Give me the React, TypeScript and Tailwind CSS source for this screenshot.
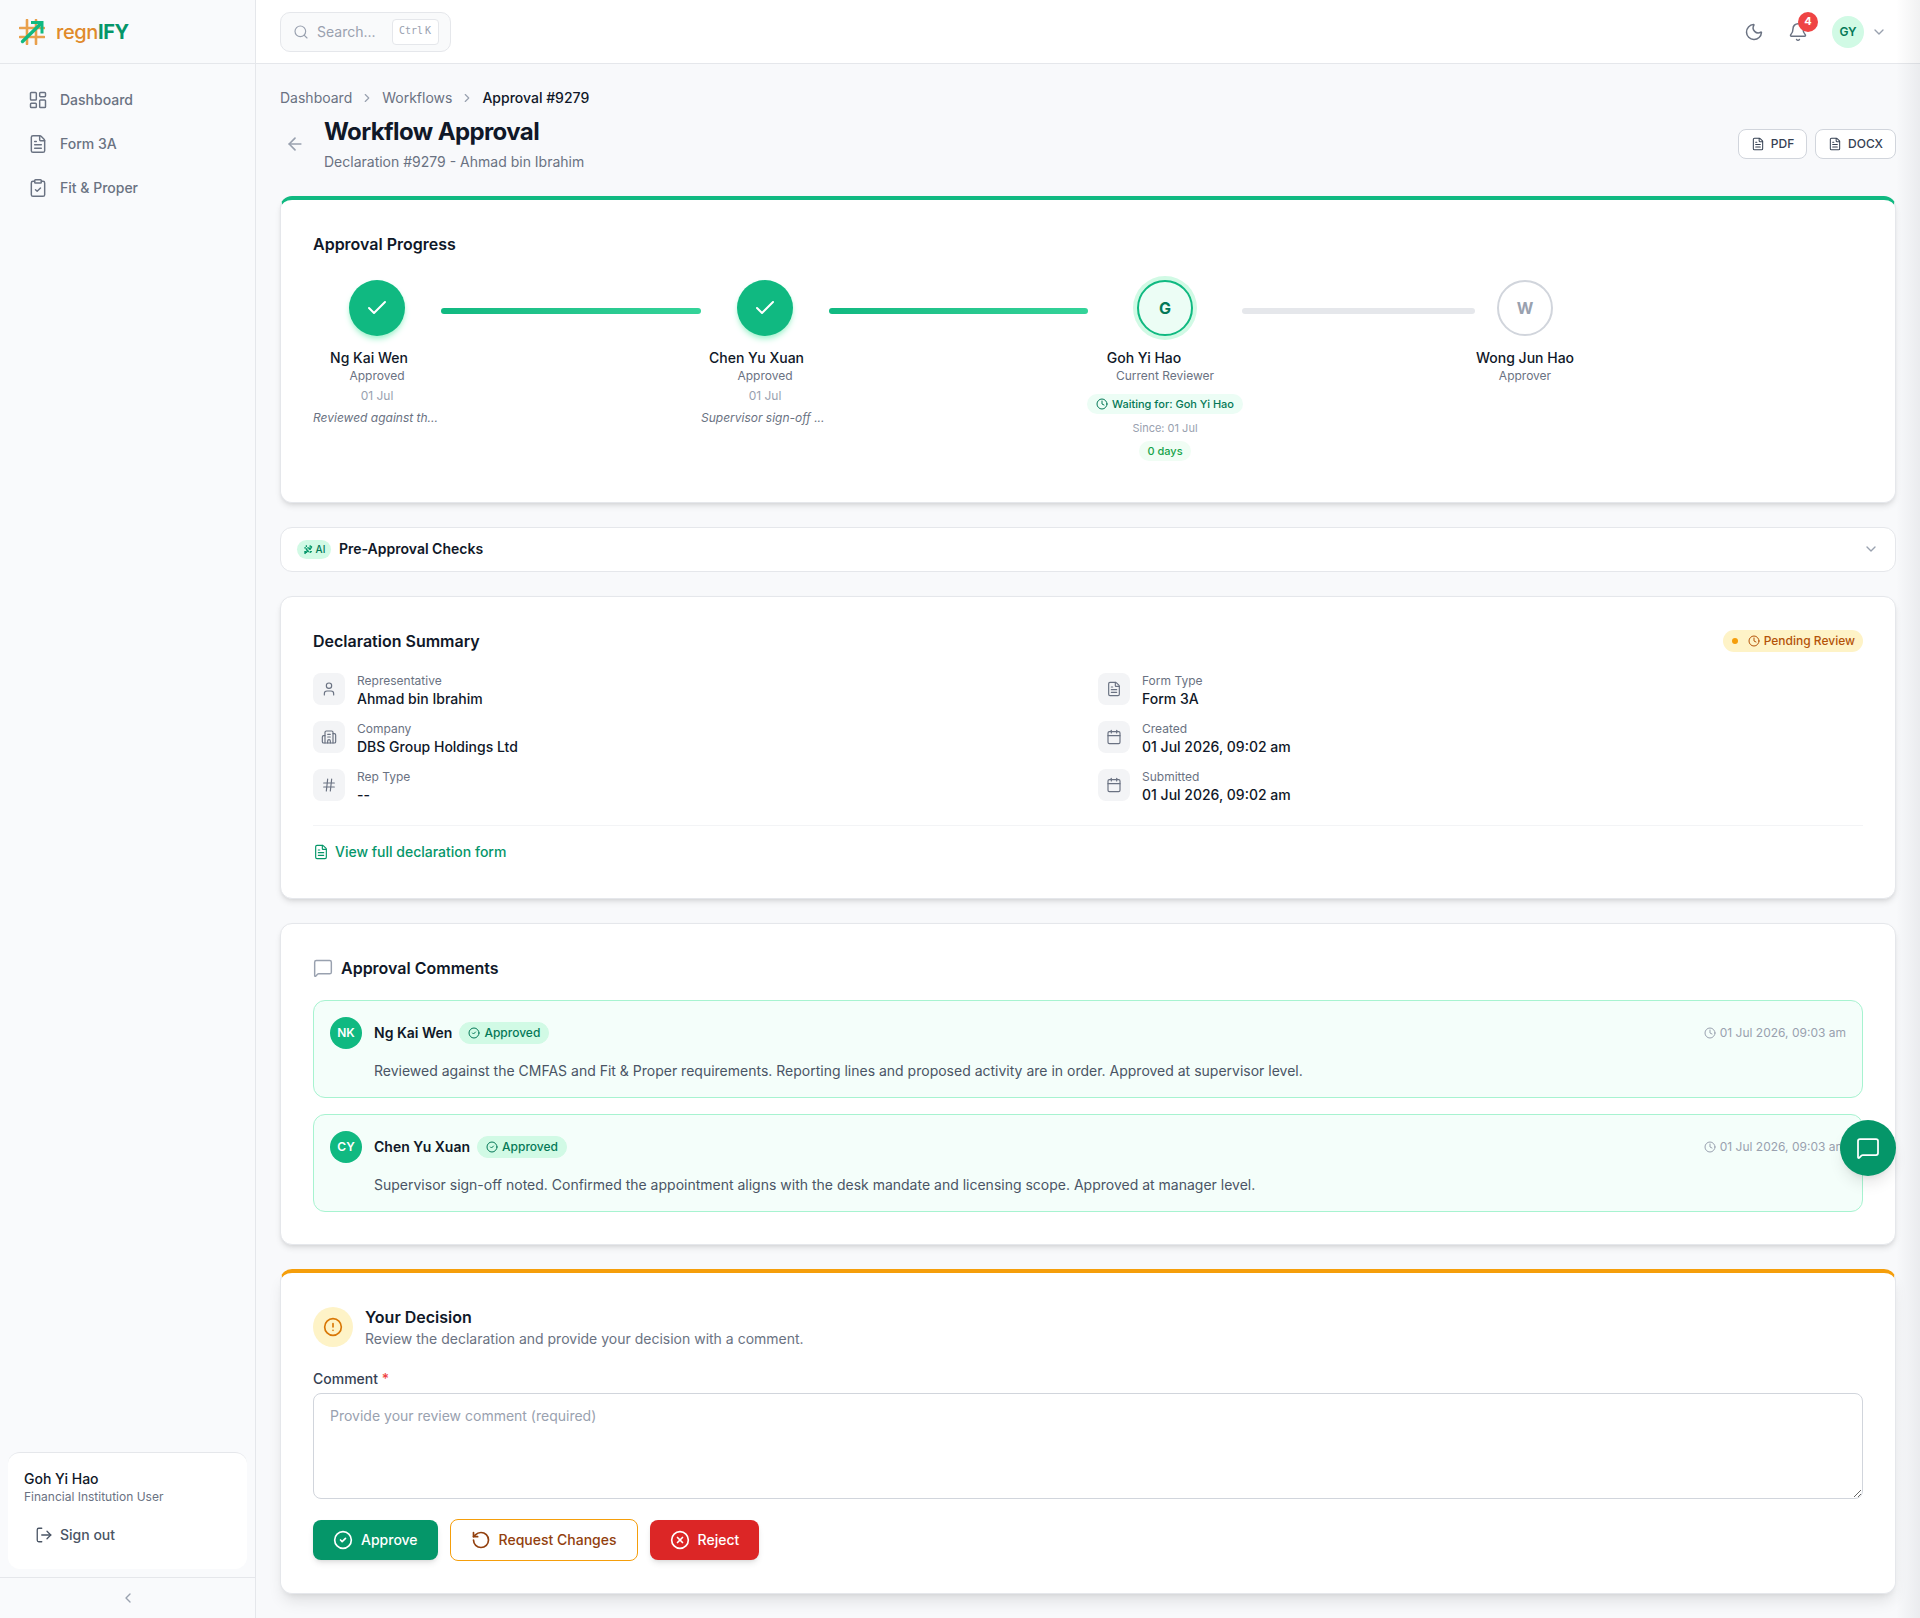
import React from 'react';
import {
  ArrowLeft,
  Bell,
  Building2,
  Calendar,
  Check,
  ChevronDown,
  ChevronLeft,
  ChevronRight,
  CircleAlert,
  CircleCheck,
  CircleX,
  ClipboardCheck,
  Clock,
  FileText,
  Hash,
  LayoutDashboard,
  LogOut,
  MessageSquare,
  Moon,
  RotateCcw,
  Search,
  User,
} from 'lucide-react';

const Logo = () => (
  <svg width="26" height="26" viewBox="0 0 26 26" fill="none">
    <path d="M8 1v24M17 1v24M1 9h24M1 18h24" stroke="#e9a04c" strokeWidth="2.6" strokeLinecap="round" />
    <path d="M3.5 22.5 21 5.5" stroke="#10b981" strokeWidth="3.4" strokeLinecap="round" />
    <path d="M13.5 3.5H23v9.5" stroke="#10b981" strokeWidth="3" strokeLinecap="square" />
  </svg>
);

const MiniLogo = () => (
  <svg width="11" height="11" viewBox="0 0 26 26" fill="none">
    <path d="M8 3v20M17 3v20M3 9h20M3 18h20" stroke="#059669" strokeWidth="3" strokeDasharray="4 3" />
    <path d="M3.5 22.5 21 5.5" stroke="#059669" strokeWidth="4" strokeDasharray="5 2" />
  </svg>
);

const NavItem = ({ icon: Icon, label }: { icon: React.ElementType; label: string }) => (
  <div className="flex items-center gap-3 px-3 py-3 text-sm font-medium text-gray-500">
    <Icon className="w-5 h-5 shrink-0" strokeWidth={1.75} />
    <span>{label}</span>
  </div>
);

const Sidebar = () => (
  <aside className="w-[256px] shrink-0 flex flex-col bg-[#f9fafc] border-r border-gray-200">
    <div className="h-[64px] shrink-0 flex items-center pl-[19px] border-b border-gray-200">
      <Logo />
      <span className="ml-[11px] text-xl tracking-[-0.4px] font-medium text-[#e08a2b]">
        regn<span className="font-bold text-[#059669]">IFY</span>
      </span>
    </div>
    <nav className="px-4 pt-[14px]">
      <NavItem icon={LayoutDashboard} label="Dashboard" />
      <NavItem icon={FileText} label="Form 3A" />
      <NavItem icon={ClipboardCheck} label="Fit & Proper" />
    </nav>
    <div className="mt-auto px-2 pb-2">
      <div className="bg-white border-t border-gray-200 rounded-xl px-4 pt-4 h-[117px]">
        <p className="text-sm font-medium leading-5 text-gray-900">Goh Yi Hao</p>
        <p className="text-xs leading-4 text-gray-500">Financial Institution User</p>
        <div className="flex items-center gap-[7px] pl-[11px] mt-5 text-sm font-medium text-gray-600">
          <LogOut className="w-[18px] h-[18px]" strokeWidth={1.75} />
          <span>Sign out</span>
        </div>
      </div>
    </div>
    <div className="h-[41px] shrink-0 flex items-center justify-center border-t border-gray-200 text-gray-400">
      <ChevronLeft className="w-4 h-4" />
    </div>
  </aside>
);

const TopBar = () => (
  <header className="h-[64px] shrink-0 flex items-center justify-between pl-6 pr-[33px] bg-white border-b border-gray-200">
    <div className="w-[171px] h-10 flex items-center gap-2 pl-3 bg-gray-50 border border-gray-200 rounded-[10px] text-sm text-gray-400">
      <Search className="w-4 h-4 shrink-0" strokeWidth={1.75} />
      <span>Search...</span>
      <kbd className="ml-[8px] w-[47px] h-[26px] flex items-center justify-center gap-[2px] bg-white border border-gray-200 rounded text-[10px] font-[400] [font-family:'DejaVu_Sans_Mono',monospace]">
        <span>Ctrl</span>
        <span>K</span>
      </kbd>
    </div>
    <div className="flex items-center">
      <Moon className="w-5 h-5 text-gray-500" strokeWidth={1.75} />
      <div className="relative ml-[24px] mr-[24px]">
        <Bell className="w-5 h-5 text-gray-500" strokeWidth={1.75} />
        <span className="absolute -top-[10px] left-[10px] w-5 h-5 flex items-center justify-center rounded-full bg-[#ef4444] text-white text-[11px] font-bold">
          4
        </span>
      </div>
      <div className="w-8 h-8 flex items-center justify-center rounded-full bg-[#d1fae5] text-[#047857] text-xs font-semibold">
        GY
      </div>
      <ChevronDown className="ml-[7px] w-4 h-4 text-gray-400" />
    </div>
  </header>
);

type Step = {
  width: string;
  namePad: string;
  name: string;
  role: string;
  state: 'done' | 'current' | 'pending';
  letter?: string;
  date?: string;
  note?: string;
};

const StepCircle = ({ step }: { step: Step }) => {
  if (step.state === 'done') {
    return (
      <div className="w-14 h-14 flex items-center justify-center rounded-full bg-[#10b981] text-white shadow-md shadow-[#a7f3d0]">
        <Check className="w-6 h-6" strokeWidth={2} />
      </div>
    );
  }
  if (step.state === 'current') {
    return (
      <div className="w-14 h-14 flex items-center justify-center rounded-full bg-[#ecfdf5] border-2 border-[#10b981] ring-4 ring-[#d1fae5] text-[#047857] text-base font-bold">
        {step.letter}
      </div>
    );
  }
  return (
    <div className="w-14 h-14 flex items-center justify-center rounded-full bg-white border-2 border-gray-300 text-gray-400 text-base font-bold">
      {step.letter}
    </div>
  );
};

const ProgressStep = ({ step, children }: { step: Step; children?: React.ReactNode }) => (
  <div className={`${step.width} shrink-0 flex flex-col items-center text-center`}>
    <StepCircle step={step} />
    <p className={`mt-3 ${step.namePad} text-sm leading-5 font-medium text-gray-900 whitespace-nowrap`}>{step.name}</p>
    <p className="text-xs leading-4 text-gray-500 whitespace-nowrap">{step.role}</p>
    {step.date && <p className="mt-[4px] text-xs leading-4 text-gray-400">{step.date}</p>}
    {step.note && <p className="mt-[6px] w-full text-xs leading-4 italic text-left text-gray-500 truncate">{step.note}</p>}
    {children}
  </div>
);

const steps: Step[] = [
  { width: 'w-[128px]', namePad: 'pr-[16px]', name: 'Ng Kai Wen', role: 'Approved', state: 'done', date: '01 Jul', note: 'Reviewed against th...' },
  { width: 'w-[128px]', namePad: 'pr-[17px]', name: 'Chen Yu Xuan', role: 'Approved', state: 'done', date: '01 Jul', note: 'Supervisor sign-off ...' },
  { width: 'w-[154px]', namePad: 'pr-[42px]', name: 'Goh Yi Hao', role: 'Current Reviewer', state: 'current', letter: 'G' },
  { width: 'w-[100px]', namePad: '', name: 'Wong Jun Hao', role: 'Approver', state: 'pending', letter: 'W' },
];

const ApprovalProgress = () => (
  <section className="bg-white rounded-xl border-x border-b border-gray-200 border-t-4 border-t-[#10b981] shadow-md px-8 pt-8 pb-[41px]">
    <h2 className="text-base leading-6 font-semibold text-gray-900">Approval Progress</h2>
    <div className="mt-6 flex items-start">
      <ProgressStep step={steps[0]} />
      <div className="w-[260px] h-[6px] mt-[28px] rounded-full bg-gradient-to-r from-[#10b981] to-[#34d399]" />
      <ProgressStep step={steps[1]} />
      <div className="w-[259px] h-[6px] mt-[28px] rounded-full bg-gradient-to-r from-[#10b981] to-[#34d399]" />
      <ProgressStep step={steps[2]}>
        <span className="mt-[10px] h-5 flex items-center gap-1 px-[9px] rounded-full bg-[#ecfdf5] text-[11px] font-medium text-[#047857] whitespace-nowrap">
          <Clock className="w-3 h-3" />
          Waiting for: Goh Yi Hao
        </span>
        <span className="mt-[6px] text-[11px] leading-4 text-gray-400">Since: 01 Jul</span>
        <span className="mt-[5px] h-5 flex items-center px-2 rounded-full bg-[#f0fdf4] text-[11px] font-medium text-[#16a34a]">
          0 days
        </span>
      </ProgressStep>
      <div className="w-[233px] h-[6px] mt-[28px] rounded-full bg-gray-200" />
      <ProgressStep step={steps[3]} />
    </div>
  </section>
);

const PreApproval = () => (
  <section className="h-[45px] flex items-center justify-between px-4 pb-px bg-white rounded-xl border border-gray-200">
    <div className="flex items-center gap-2">
      <span className="h-[19px] w-[34px] flex items-center justify-center gap-[2px] rounded-full bg-[#d1fae5] text-[10px] font-medium text-[#047857]">
        <MiniLogo />
        AI
      </span>
      <span className="text-sm font-semibold text-gray-900">Pre-Approval Checks</span>
    </div>
    <ChevronDown className="w-4 h-4 text-gray-400" />
  </section>
);

const Field = ({ icon: Icon, label, value }: { icon: React.ElementType; label: string; value: string }) => (
  <div className="h-8 flex items-start gap-3">
    <div className="w-8 h-8 shrink-0 flex items-center justify-center rounded-lg bg-gray-100 text-gray-500">
      <Icon className="w-4 h-4" strokeWidth={1.75} />
    </div>
    <div>
      <p className="text-xs leading-4 text-gray-500">{label}</p>
      <p className="text-sm leading-5 font-medium text-gray-900">{value}</p>
    </div>
  </div>
);

const DeclarationSummary = () => (
  <section className="bg-white rounded-xl border border-gray-200 shadow-md px-8 pt-8 pb-9">
    <div className="flex items-center justify-between">
      <h2 className="text-base leading-6 font-semibold text-gray-900">Declaration Summary</h2>
      <span className="h-[22px] flex items-center gap-1 pl-[9px] pr-2 rounded-full bg-[#fef3c7] text-xs font-medium text-[#b45309]">
        <span className="w-[6px] h-[6px] mr-[6px] rounded-full bg-[#f59e0b]" />
        <Clock className="w-3 h-3" />
        Pending Review
      </span>
    </div>
    <div className="mt-5 grid grid-cols-2 gap-x-5 gap-y-4">
      <Field icon={User} label="Representative" value="Ahmad bin Ibrahim" />
      <Field icon={FileText} label="Form Type" value="Form 3A" />
      <Field icon={Building2} label="Company" value="DBS Group Holdings Ltd" />
      <Field icon={Calendar} label="Created" value="01 Jul 2026, 09:02 am" />
      <Field icon={Hash} label="Rep Type" value="--" />
      <Field icon={Calendar} label="Submitted" value="01 Jul 2026, 09:02 am" />
    </div>
    <div className="mt-6 pt-4 border-t border-gray-100 flex items-center gap-[6px] text-sm font-medium text-[#059669]">
      <FileText className="w-4 h-4" strokeWidth={1.75} />
      View full declaration form
    </div>
  </section>
);

const Comment = ({ initials, name, text }: { initials: string; name: string; text: string }) => (
  <div className="p-4 rounded-xl border border-[#a7f3d0] bg-[#f4fefa]">
    <div className="flex items-center justify-between">
      <div className="flex items-center">
        <div className="w-8 h-8 flex items-center justify-center rounded-full bg-[#10b981] text-white text-xs font-semibold">
          {initials}
        </div>
        <span className="ml-3 text-sm font-semibold text-gray-900">{name}</span>
        <span className="ml-[7px] h-[22px] flex items-center gap-1 px-2 rounded-full bg-[#d1fae5] border border-[#d1fae5] text-xs font-medium text-[#047857]">
          <CircleCheck className="w-3 h-3" />
          Approved
        </span>
      </div>
      <span className="flex items-center gap-1 text-xs text-gray-400">
        <Clock className="w-3 h-3" />
        01 Jul 2026, 09:03 am
      </span>
    </div>
    <p className="mt-3 pl-11 text-sm leading-5 text-gray-600">{text}</p>
  </div>
);

const ApprovalComments = () => (
  <section className="bg-white rounded-xl border border-gray-200 shadow-md p-8">
    <div className="flex items-center gap-2">
      <MessageSquare className="w-5 h-5 text-gray-400" strokeWidth={1.75} />
      <h2 className="text-base leading-6 font-semibold text-gray-900">Approval Comments</h2>
    </div>
    <div className="mt-5 space-y-4">
      <Comment
        initials="NK"
        name="Ng Kai Wen"
        text="Reviewed against the CMFAS and Fit & Proper requirements. Reporting lines and proposed activity are in order. Approved at supervisor level."
      />
      <Comment
        initials="CY"
        name="Chen Yu Xuan"
        text="Supervisor sign-off noted. Confirmed the appointment aligns with the desk mandate and licensing scope. Approved at manager level."
      />
    </div>
  </section>
);

const YourDecision = () => (
  <section className="bg-white rounded-xl border-x border-b border-gray-200 border-t-4 border-t-[#f59e0b] shadow-lg px-8 pt-8 pb-8">
    <div className="flex items-center gap-3">
      <div className="w-10 h-10 flex items-center justify-center rounded-full bg-[#fef3c7] text-[#d97706]">
        <CircleAlert className="w-5 h-5" />
      </div>
      <div>
        <h2 className="text-base leading-6 font-semibold text-gray-900">Your Decision</h2>
        <p className="text-sm leading-5 text-gray-500">Review the declaration and provide your decision with a comment.</p>
      </div>
    </div>
    <label className="block mt-5 mb-1 text-sm leading-5 font-medium text-gray-700">
      Comment <span className="text-[#ef4444]">*</span>
    </label>
    <textarea
      className="block w-full h-[106px] px-4 py-3 rounded-lg border border-gray-300 text-sm bg-white placeholder:text-gray-400"
      placeholder="Provide your review comment (required)"
    />
    <div className="mt-5 flex items-center gap-3">
      <button className="h-10 px-5 flex items-center gap-2 rounded-lg bg-[#059669] text-white text-sm font-medium shadow-md">
        <CircleCheck className="w-5 h-5" />
        Approve
      </button>
      <button className="h-[42px] px-5 flex items-center gap-2 rounded-lg border border-[#f59e0b] bg-white text-[#92400e] text-sm font-medium">
        <RotateCcw className="w-5 h-5" />
        Request Changes
      </button>
      <button className="h-10 px-5 flex items-center gap-2 rounded-lg bg-[#dc2626] text-white text-sm font-medium shadow-md">
        <CircleX className="w-5 h-5" />
        Reject
      </button>
    </div>
  </section>
);

const ExportButton = ({ label, width }: { label: string; width: string }) => (
  <button className={`${width} h-[30px] flex items-center justify-center gap-[6px] rounded-lg border border-gray-300 bg-white text-xs font-medium text-gray-700`}>
    <FileText className="w-[14px] h-[14px]" strokeWidth={1.75} />
    {label}
  </button>
);

export default function App() {
  return (
    <div className="relative min-h-screen flex bg-[#f8f9fb] [font-family:Inter,sans-serif]">
      <Sidebar />
      <div className="flex-1 min-w-0 flex flex-col">
        <TopBar />
        <main className="px-6 pt-6 pb-6">
          <div className="flex items-center gap-2 text-sm leading-5 text-gray-500">
            <span>Dashboard</span>
            <ChevronRight className="w-[14px] h-[14px] text-gray-400" />
            <span>Workflows</span>
            <ChevronRight className="w-[14px] h-[14px] text-gray-400" />
            <span className="font-medium text-gray-900">Approval #9279</span>
          </div>
          <div className="mt-2 mb-6 flex items-center justify-between">
            <div className="flex items-center">
              <ArrowLeft className="ml-[5px] w-5 h-5 text-gray-400" />
              <div className="ml-[19px]">
                <h1 className="text-2xl leading-8 font-bold tracking-tight text-gray-900">Workflow Approval</h1>
                <p className="mt-1 text-sm leading-5 text-gray-500">Declaration #9279 - Ahmad bin Ibrahim</p>
              </div>
            </div>
            <div className="flex items-center gap-2">
              <ExportButton label="PDF" width="w-[69px]" />
              <ExportButton label="DOCX" width="w-[81px]" />
            </div>
          </div>
          <div className="space-y-6">
            <ApprovalProgress />
            <PreApproval />
            <DeclarationSummary />
            <ApprovalComments />
            <YourDecision />
          </div>
        </main>
      </div>
      {/* floating chat button sits over the second comment */}
      <button className="absolute top-[1120px] right-6 w-14 h-14 flex items-center justify-center rounded-full bg-[#059669] text-white shadow-lg">
        <MessageSquare className="w-6 h-6" strokeWidth={1.75} />
      </button>
      <div className="pointer-events-none absolute inset-y-0 right-0 w-[24px] bg-gradient-to-r from-transparent to-gray-900/[0.06]" />
    </div>
  );
}
